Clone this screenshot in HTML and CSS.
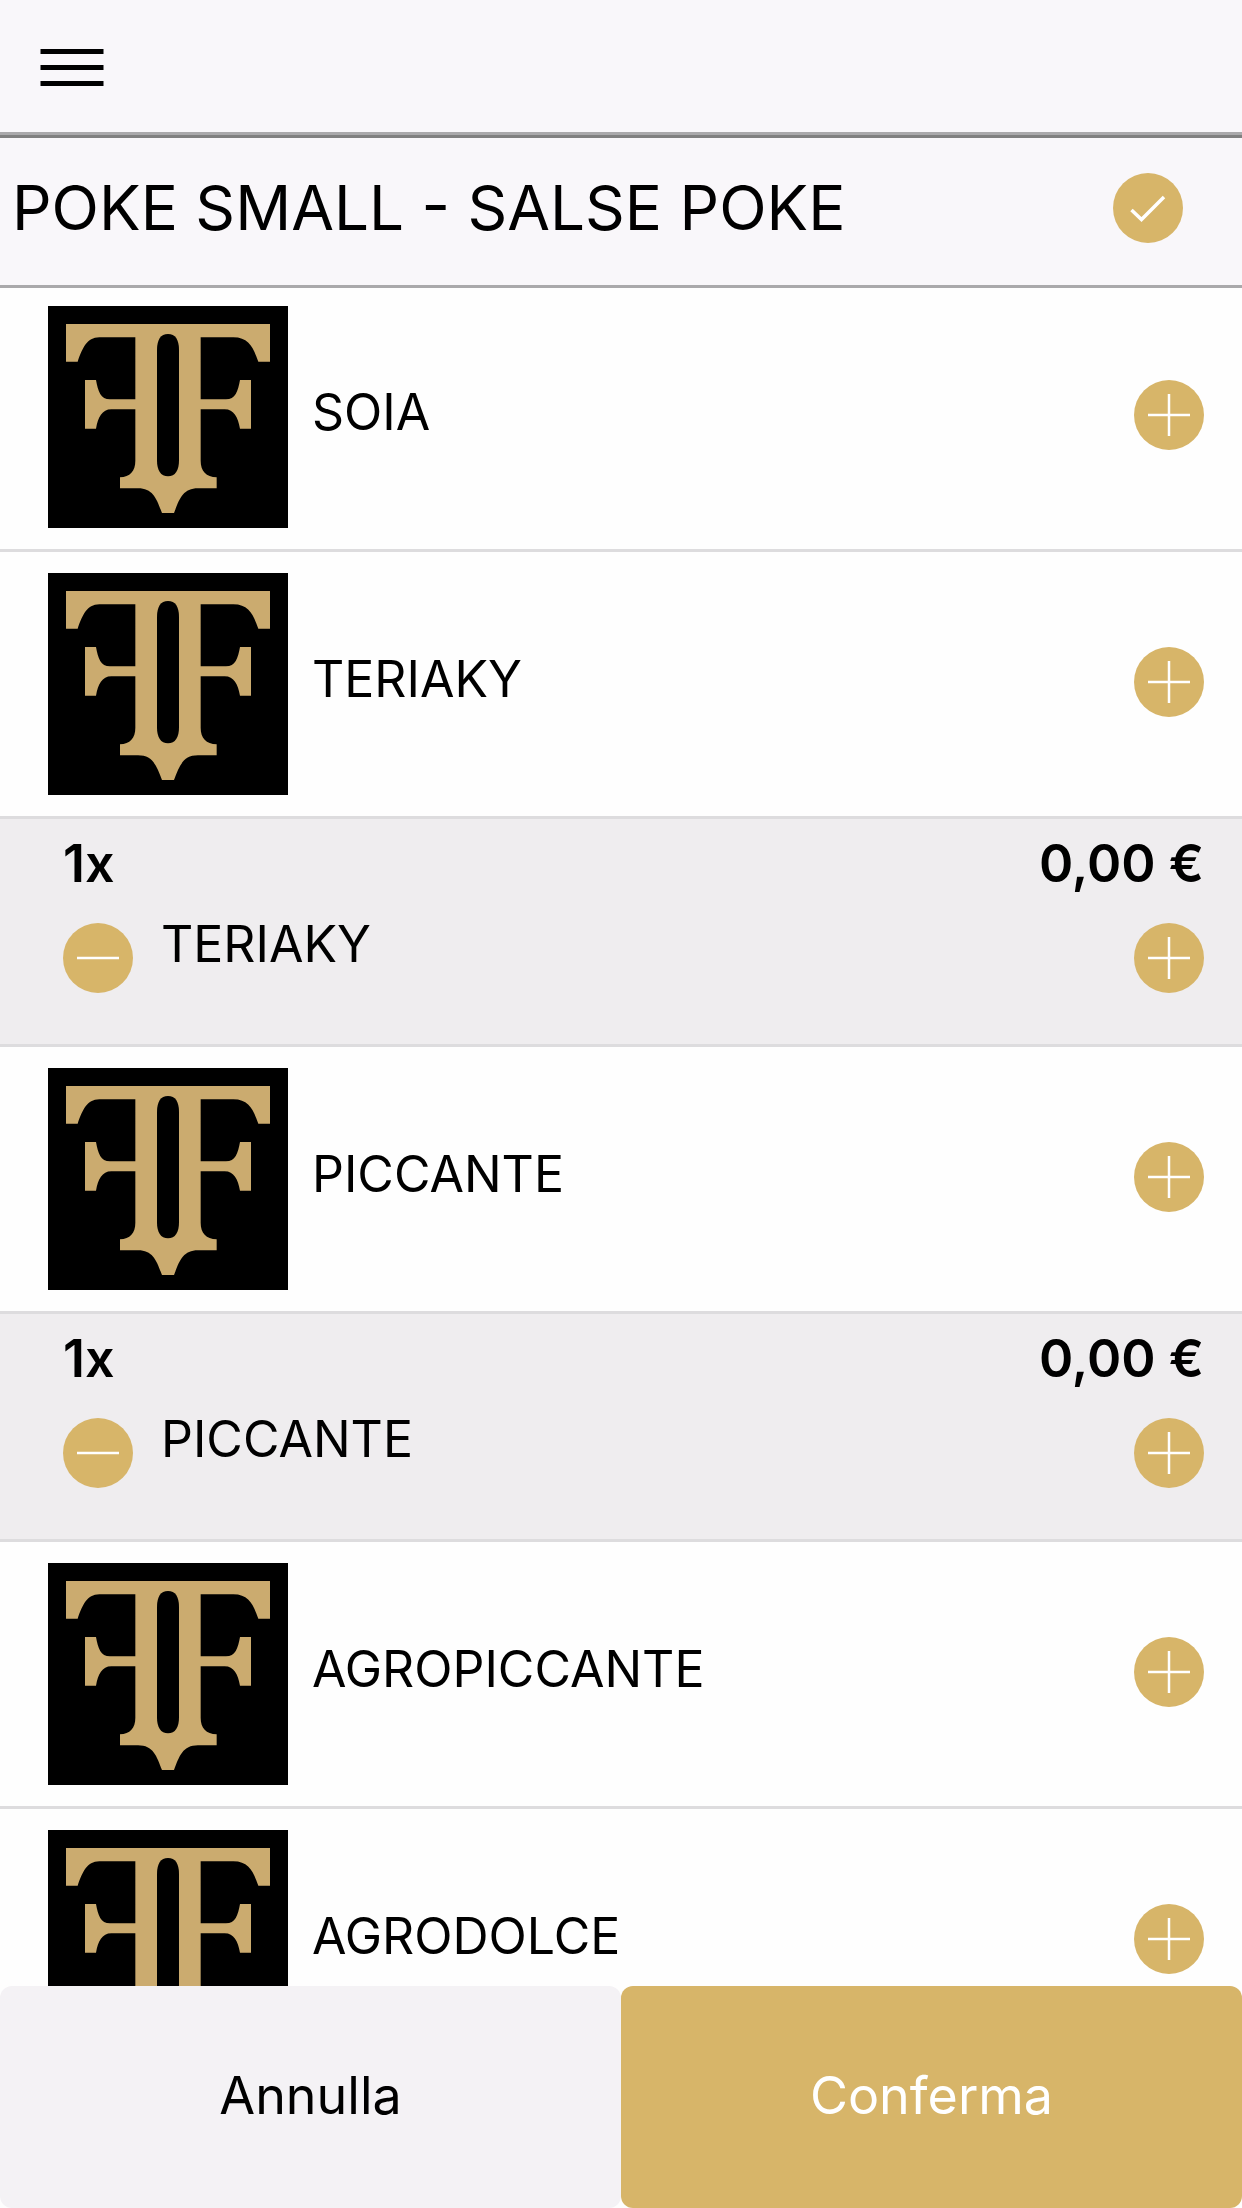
FILE: index.html
```html
<!DOCTYPE html>
<html lang="it">
<head>
    <meta charset="UTF-8">
    <meta name="viewport" content="width=device-width, initial-scale=1.0">
    <title>Poke Small - Salse Poke</title>
    <link rel="stylesheet" href="styles.css">
</head>
<body>
    <!-- Shared icons -->
    <svg class="sprite" aria-hidden="true">
        <symbol id="logo" viewBox="0 0 720 666">
            <rect width="720" height="666" fill="#000"/>
            <path fill="#cbab6f" d="M54 54H666V167H631C617 128 604 94 556 94H458V280H534C562 280 570 256 576 222H609V368H576C570 334 558 310 530 310H458V464C458 496 474 512 506 514V547H450C404 547 394 580 378 621H342C326 580 316 547 270 547H216V514C246 512 262 496 262 464V310H190C162 310 150 334 144 368H111V222H144C150 256 158 280 186 280H262V94H154C116 94 103 128 89 167H54Z"/>
            <path fill="#000" d="M327 132C327 101 338 84 360 84S393 101 393 132V463C393 494 382 511 360 511S327 494 327 463Z"/>
        </symbol>
        <symbol id="plus" viewBox="0 0 70 70">
            <circle cx="35" cy="35" r="35" fill="#d7b569"/>
            <path d="M14 35H56M35 14V56" stroke="#fff" stroke-width="2.5"/>
        </symbol>
        <symbol id="minus" viewBox="0 0 70 70">
            <circle cx="35" cy="35" r="35" fill="#d7b569"/>
            <path d="M14 35H56" stroke="#fff" stroke-width="2.5"/>
        </symbol>
        <symbol id="check" viewBox="0 0 70 70">
            <circle cx="35" cy="35" r="35" fill="#d7b569"/>
            <path d="M18.5 37L28.500 46.5L51 24" fill="none" stroke="#fff" stroke-width="3.500"/>
        </symbol>
    </svg>

    <header class="topbar">
        <button type="button" class="menu-btn" aria-label="Menu">
            <svg viewBox="0 0 63 37" aria-hidden="true">
                <path d="M0 2.500H63M0 18.500H63M0 34.500H63" stroke="#000" stroke-width="5"/>
            </svg>
        </button>
    </header>

    <div class="title-bar">
        <h1>POKE SMALL - SALSE POKE</h1>
        <button type="button" class="icon-btn" aria-label="Fatto"><svg><use href="#check"/></svg></button>
    </div>

    <main class="list">
        <div class="item">
            <svg class="thumb" aria-hidden="true"><use href="#logo"/></svg>
            <span class="name">SOIA</span>
            <button type="button" class="icon-btn" aria-label="Aggiungi SOIA"><svg><use href="#plus"/></svg></button>
        </div>

        <div class="item">
            <svg class="thumb" aria-hidden="true"><use href="#logo"/></svg>
            <span class="name">TERIAKY</span>
            <button type="button" class="icon-btn" aria-label="Aggiungi TERIAKY"><svg><use href="#plus"/></svg></button>
        </div>
        <div class="selected">
            <div class="selected-head">
                <span>1x</span>
                <span>0,00 €</span>
            </div>
            <div class="selected-body">
                <button type="button" class="icon-btn" aria-label="Togli TERIAKY"><svg><use href="#minus"/></svg></button>
                <span class="selected-name">TERIAKY</span>
                <button type="button" class="icon-btn" aria-label="Aggiungi un altro TERIAKY"><svg><use href="#plus"/></svg></button>
            </div>
        </div>

        <div class="item">
            <svg class="thumb" aria-hidden="true"><use href="#logo"/></svg>
            <span class="name">PICCANTE</span>
            <button type="button" class="icon-btn" aria-label="Aggiungi PICCANTE"><svg><use href="#plus"/></svg></button>
        </div>
        <div class="selected">
            <div class="selected-head">
                <span>1x</span>
                <span>0,00 €</span>
            </div>
            <div class="selected-body">
                <button type="button" class="icon-btn" aria-label="Togli PICCANTE"><svg><use href="#minus"/></svg></button>
                <span class="selected-name">PICCANTE</span>
                <button type="button" class="icon-btn" aria-label="Aggiungi un altro PICCANTE"><svg><use href="#plus"/></svg></button>
            </div>
        </div>

        <div class="item">
            <svg class="thumb" aria-hidden="true"><use href="#logo"/></svg>
            <span class="name">AGROPICCANTE</span>
            <button type="button" class="icon-btn" aria-label="Aggiungi AGROPICCANTE"><svg><use href="#plus"/></svg></button>
        </div>

        <div class="item">
            <svg class="thumb" aria-hidden="true"><use href="#logo"/></svg>
            <span class="name">AGRODOLCE</span>
            <button type="button" class="icon-btn" aria-label="Aggiungi AGRODOLCE"><svg><use href="#plus"/></svg></button>
        </div>
    </main>

    <footer class="actions">
        <button type="button" class="action cancel">Annulla</button>
        <button type="button" class="action confirm">Conferma</button>
    </footer>
</body>
</html>
```
FILE: styles.css
```css
:root {
    --gold: #d7b569;
    --bar-bg: #f9f7fa;
    --selected-bg: #efedef;
    --cancel-bg: #f4f2f5;
    --line: #dddcde;
    --line-dark: #aaa9ab;
}

* {
    box-sizing: border-box;
}

body {
    margin: 0;
    height: 100vh;
    display: flex;
    flex-direction: column;
    font-family: 'Inter', sans-serif;
    font-size: 50px;
    color: #000;
    background: #fefefe;
}

button {
    padding: 0;
    border: none;
    background: none;
    color: inherit;
    font: inherit;
    cursor: pointer;
}

.sprite {
    position: absolute;
    width: 0;
    height: 0;
}

/* Header */
.topbar {
    flex: none;
    padding: 49px 40px 46px;
    background: var(--bar-bg);
    border-bottom: 3px solid var(--line-dark);
}

.menu-btn {
    display: block;
}

.menu-btn svg {
    display: block;
    width: 64px;
    height: 37px;
}

.title-bar {
    flex: none;
    display: flex;
    align-items: center;
    justify-content: space-between;
    padding: 35px 59px 42px 12px;
    background: var(--bar-bg);
    border-top: 3px solid #808080;
    border-bottom: 3px solid var(--line-dark);
}

h1 {
    margin: 0;
    font-size: 62px;
    font-weight: 400;
    line-height: 70px;
}

.icon-btn {
    flex: none;
    width: 70px;
    height: 70px;
}

.icon-btn svg {
    display: block;
    width: 100%;
    height: 100%;
}

/* List */
.list {
    flex: 1;
    min-height: 0;
    overflow-y: auto;
    scrollbar-width: none;
}

.item {
    display: flex;
    align-items: center;
    padding: 21px 38px 21px 48px;
    border-bottom: 3px solid var(--line);
}

.item:first-child {
    padding-top: 18px;
}

.item .icon-btn {
    margin-bottom: 4px;
}

.thumb {
    flex: none;
    width: 240px;
    height: 222px;
}

.name {
    flex: 1;
    padding: 0 24px 10px;
}

.selected {
    padding: 18px 38px 51px 63px;
    background: var(--selected-bg);
    border-bottom: 3px solid var(--line);
}

.selected-head {
    display: flex;
    justify-content: space-between;
    margin-bottom: 32px;
    font-size: 52px;
    font-weight: 600;
    line-height: 54px;
}

.selected-body {
    display: flex;
    align-items: flex-start;
    gap: 28px;
}

.selected-name {
    flex: 1;
    line-height: 42px;
}

/* Bottom buttons */
.actions {
    flex: none;
    display: flex;
}

.action {
    flex: 1;
    height: 222px;
    padding-bottom: 4px;
    border-radius: 12px;
    font-size: 52px;
}

.cancel {
    background: var(--cancel-bg);
}

.confirm {
    background: var(--gold);
    color: #fff;
}
```
